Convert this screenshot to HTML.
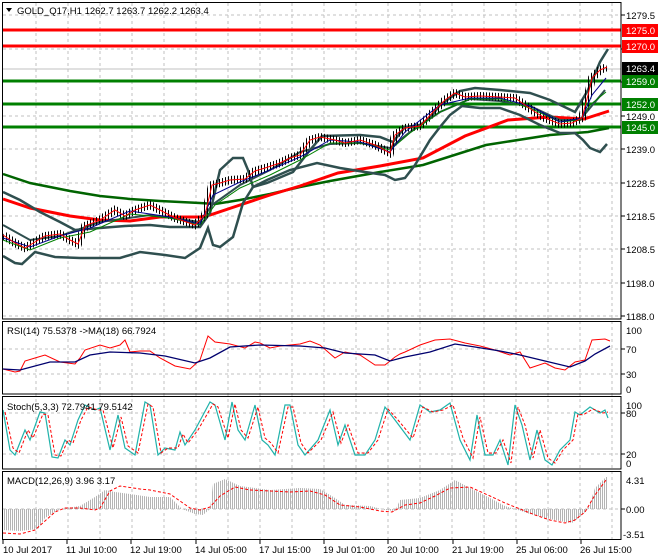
<!DOCTYPE html>
<html><head><meta charset="utf-8"><style>
html,body{margin:0;padding:0;background:#fff;}
svg{display:block;font-family:"Liberation Sans",sans-serif;font-size:9.5px;}
</style></head><body>
<svg width="660" height="560" viewBox="0 0 660 560" xmlns="http://www.w3.org/2000/svg">
<defs>
<pattern id="bars" width="3" height="4" patternUnits="userSpaceOnUse"><rect x="0" y="0" width="1" height="4" fill="#000"/></pattern>
<pattern id="hist" width="2" height="4" patternUnits="userSpaceOnUse"><rect x="0" y="0" width="1" height="4" fill="#b4b4b4"/></pattern>
</defs>
<rect width="660" height="560" fill="#fff"/>
<g stroke="#c0c0c0" stroke-width="1" stroke-dasharray="3,3" fill="none">
<path d="M36 3V539M68 3V539M100 3V539M132 3V539M164 3V539M196 3V539M228 3V539M260 3V539M292 3V539M324 3V539M356 3V539M388 3V539M420 3V539M452 3V539M484 3V539M516 3V539M548 3V539M580 3V539M612 3V539"/>
<path d="M3 15H621M3 49H621M3 82H621M3 116H621M3 149H621M3 183H621M3 216H621M3 249H621M3 283H621M3 316H621"/>
<path d="M3 349H621M3 374H621M3 413H621M3 454H621M3 509H621"/>
</g>
<line x1="3" y1="69" x2="621" y2="69" stroke="#c0c0c0"/>
<g stroke-width="3" fill="none">
<line x1="3" y1="30" x2="621" y2="30" stroke="#ff0000"/>
<line x1="3" y1="46" x2="621" y2="46" stroke="#ff0000"/>
<line x1="3" y1="81" x2="621" y2="81" stroke="#008000"/>
<line x1="3" y1="104" x2="621" y2="104" stroke="#008000"/>
<line x1="3" y1="127" x2="621" y2="127" stroke="#008000"/>
</g>
<polyline fill="none" stroke="#006400" stroke-width="2.5" points="3,174 30,183 70,191 100,196 130,199 160,201 200,203 215,204 240,200 270,194 300,187 330,181 380,172 423,165 486,145 550,135 588,132 609,128"/>
<polyline fill="none" stroke="#ff0000" stroke-width="3" points="3,199 30,208 70,216 100,220 130,221 160,217 200,217 210,215 240,205 270,195 300,186 338,173 380,166 423,158 465,136 508,120 550,117 584,119 609,111"/>
<polyline fill="none" stroke="#2f4f4f" stroke-width="2.5" points="3,192 20,200 40,212 60,222 75,230 100,228 125,226 150,225 170,227 200,227 210,213 220,170 233,158 243,158 248,170 253,187 267,183 293,172 310,150 322,136 360,135 380,137 393,142 405,127 420,125 430,118 440,105 460,91 475,88 500,90 530,93 550,100 575,112 588,90 600,62 608,49"/>
<polyline fill="none" stroke="#2f4f4f" stroke-width="2.5" points="3,256 15,263 22,264 35,252 55,257 80,258 95,258 120,258 140,252 165,255 185,258 200,248 208,228 213,245 220,247 233,237 243,203 253,187 267,180 290,170 317,163 340,168 365,172 385,175 395,180 405,178 415,165 430,140 440,127 450,115 462,106 480,108 500,108 520,115 540,125 560,133 575,133 583,140 590,148 600,152 607,144"/>
<polyline fill="none" stroke="#2f4f4f" stroke-width="2" points="3,225 30,240 60,236 100,222 150,215 200,222 212,205 240,185 270,170 300,152 330,144 360,143 390,148 410,132 440,112 470,99 500,101 530,106 560,120 580,120 590,108 605,90"/>
<polyline fill="none" stroke="url(#bars)" stroke-width="8" points="3,235 15,243 25,248 30,245 45,236 60,234 70,240 78,244 85,226 100,220 115,210 125,216 135,210 150,205 160,210 175,218 195,225 205,215 212,185 220,183 230,180 245,179 255,171 265,168 280,163 290,158 300,155 310,140 320,137 335,140 345,143 360,140 375,145 390,153 395,135 405,128 420,126 435,110 445,100 455,93 465,97 480,96 500,97 515,98 525,105 535,112 545,118 560,124 572,123 582,118 588,95 592,78 600,70 607,67"/>
<polyline fill="none" stroke="#008000" stroke-width="1" points="3,240 30,250 60,238 90,232 130,214 170,218 200,225 215,205 240,188 270,175 300,160 330,143 360,143 390,150 410,133 440,112 470,99 500,99 530,108 560,122 580,120 590,105 606,92"/>
<polyline fill="none" stroke="#00008b" stroke-width="1" points="3,238 30,247 60,236 90,228 130,211 170,217 200,224 213,195 240,182 270,170 300,157 330,140 360,142 390,152 405,132 440,105 470,98 500,98 530,106 560,122 582,118 592,95 606,78"/>
<polyline fill="none" stroke="#ff0000" stroke-width="1" points="3,235 15,243 25,248 30,245 45,236 60,234 70,240 78,244 85,226 100,220 115,210 125,216 135,210 150,205 160,210 175,218 195,225 205,215 212,185 220,183 230,180 245,179 255,171 265,168 280,163 290,158 300,155 310,140 320,137 335,140 345,143 360,140 375,145 390,153 395,135 405,128 420,126 435,110 445,100 455,93 465,97 480,96 500,97 515,98 525,105 535,112 545,118 560,124 572,123 582,118 588,95 592,78 600,70 607,67"/>

<polyline fill="none" stroke="#ff0000" stroke-width="1" points="3,369 15,372 20,371 25,361 35,358 45,355 60,362 75,364 80,358 85,350 100,345 110,348 120,345 125,340 130,352 140,351 150,351 160,358 175,366 190,369 200,360 208,336 215,342 230,344 245,348 255,342 260,343 270,348 280,346 300,344 310,341 320,345 335,358 345,352 360,355 375,365 385,365 395,357 400,354 405,352 420,345 435,340 450,339 465,343 480,346 495,350 510,355 520,352 530,368 545,363 555,368 565,370 575,362 585,360 592,340 605,339 610,341"/>
<polyline fill="none" stroke="#00006e" stroke-width="1.3" points="3,369 20,370 50,362 75,362 90,355 110,352 140,353 165,356 195,363 210,358 230,347 260,345 300,346 325,348 345,353 375,355 390,361 405,357 430,352 455,344 475,347 500,351 520,355 545,361 570,367 585,361 595,354 610,346"/>
<polyline fill="none" stroke="#20b2aa" stroke-width="1.2" points="3,410 10,450 15,455 25,430 30,440 40,412 45,413 52,457 58,458 65,440 70,445 78,420 85,405 95,410 100,408 110,450 118,415 125,448 135,455 145,402 150,405 158,455 165,448 175,450 180,432 185,445 195,430 210,402 215,405 225,440 232,402 238,430 245,440 255,405 262,440 268,445 275,455 285,405 290,405 298,445 305,455 318,440 330,410 338,445 345,425 355,455 365,455 375,440 385,407 395,420 410,440 420,405 430,412 440,410 450,403 460,440 470,460 477,415 485,455 493,455 500,440 508,465 515,405 522,425 530,460 537,430 545,460 552,465 560,450 570,440 575,412 580,415 590,407 600,413 605,410 608,418"/>
<polyline fill="none" stroke="#ff0000" stroke-width="1" stroke-dasharray="3,2" points="5,412 13,448 19,453 28,430 33,438 43,414 48,415 55,455 61,456 68,440 73,443 81,420 88,407 98,410 103,410 113,448 121,417 128,446 138,453 148,404 153,407 161,453 168,448 178,448 183,434 188,443 198,430 213,404 218,407 228,438 235,404 241,430 248,438 258,407 265,438 271,443 278,453 288,407 293,407 301,443 308,453 321,440 333,412 341,443 348,425 358,453 368,453 378,440 388,409 398,420 413,438 423,407 433,412 443,410 453,405 463,438 473,458 480,417 488,453 496,453 503,440 511,463 518,407 525,425 533,458 540,430 548,458 555,463 563,450 573,440 578,414 583,415 593,409 603,413 608,412"/>
<polygon fill="url(#hist)" points="3,509 3,530 20,531 38,529 45,518 55,512 60,509 80,506 95,497 105,490 115,492 130,494 150,497 170,497 178,505 182,509 195,514 203,515 210,509 213,484 225,479 240,486 270,490 300,488 320,489 335,498 345,505 370,506 385,510 395,511 400,500 420,498 440,490 455,480 470,488 490,498 505,506 515,509 530,514 550,519 565,522 572,523 580,517 588,509 595,488 600,483 606,477 608,477 608,509"/>
<polyline fill="none" stroke="#ff0000" stroke-width="1" stroke-dasharray="3,2" points="3,533 20,534 35,530 45,521 55,512 65,508 80,508 95,510 100,508 110,491 120,486 140,489 150,490 170,494 180,501 190,508 200,510 210,507 220,496 235,487 250,490 270,491 290,492 310,491 325,495 340,505 360,507 380,511 392,512 405,505 420,503 435,496 450,488 470,487 490,496 505,503 520,509 535,515 550,520 565,523 575,520 585,512 595,495 606,480"/>

<g fill="none" stroke="#000" stroke-width="1">
<rect x="2.5" y="2.5" width="618.5" height="316.5"/>
<rect x="2.5" y="321.5" width="618.5" height="72.5"/>
<rect x="2.5" y="396.5" width="618.5" height="72.5"/>
<rect x="2.5" y="471.5" width="618.5" height="68"/>
<path d="M621 15h4M621 49h4M621 82h4M621 116h4M621 149h4M621 183h4M621 216h4M621 249h4M621 283h4M621 316h4M621 349h4M621 374h4M621 413h4M621 454h4M621 509h4"/>
<path d="M3 540v4M67 540v4M131 540v4M196 540v4M260 540v4M324 540v4M388 540v4M453 540v4M517 540v4M581 540v4"/>
</g>
<polygon points="6,8 12,8 9,12" fill="#000"/>
<text x="17" y="14" fill="#000">GOLD_Q17,H1  1262.7 1263.7 1262.2 1263.4</text>
<text x="7" y="334" fill="#000">RSI(14) 75.5378  -&gt;MA(18) 66.7924</text>
<text x="7" y="410" fill="#000">Stoch(5,3,3) 72.7941 79.5142</text>
<text x="7" y="484" fill="#000">MACD(12,26,9) 3.96 3.17</text>
<g fill="#000">
<text x="626" y="19">1279.5</text>
<text x="626" y="53">1269.0</text>
<text x="626" y="120">1249.0</text>
<text x="626" y="153">1239.0</text>
<text x="626" y="187">1228.5</text>
<text x="626" y="220">1218.5</text>
<text x="626" y="253">1208.5</text>
<text x="626" y="287">1198.0</text>
<text x="626" y="320">1188.0</text>
<text x="626" y="334">100</text>
<text x="626" y="353">70</text>
<text x="626" y="378">30</text>
<text x="626" y="393">0</text>
<text x="626" y="409">100</text>
<text x="626" y="417">80</text>
<text x="626" y="458">20</text>
<text x="626" y="467">0</text>
<text x="626" y="484">4.31</text>
<text x="626" y="513">0.00</text>
<text x="623" y="538">-3.51</text>
</g>
<rect x="622" y="24" width="36" height="13" fill="#ff0000"/><text x="626" y="34" fill="#fff">1275.0</text>
<rect x="622" y="40" width="36" height="13" fill="#ff0000"/><text x="626" y="50" fill="#fff">1270.0</text>
<rect x="622" y="62" width="36" height="13" fill="#000"/><text x="626" y="72" fill="#fff">1263.4</text>
<rect x="622" y="75" width="36" height="13" fill="#008000"/><text x="626" y="85" fill="#fff">1259.0</text>
<rect x="622" y="98" width="36" height="13" fill="#008000"/><text x="626" y="108" fill="#fff">1252.0</text>
<rect x="622" y="121" width="36" height="13" fill="#008000"/><text x="626" y="131" fill="#fff">1245.0</text>
<g fill="#000">
<text x="3" y="553">10 Jul 2017</text>
<text x="66" y="553">11 Jul 10:00</text>
<text x="130" y="553">12 Jul 19:00</text>
<text x="195" y="553">14 Jul 05:00</text>
<text x="259" y="553">17 Jul 15:00</text>
<text x="323" y="553">19 Jul 01:00</text>
<text x="387" y="553">20 Jul 10:00</text>
<text x="452" y="553">21 Jul 19:00</text>
<text x="516" y="553">25 Jul 06:00</text>
<text x="580" y="553">26 Jul 15:00</text>
</g>
</svg>
</body></html>
